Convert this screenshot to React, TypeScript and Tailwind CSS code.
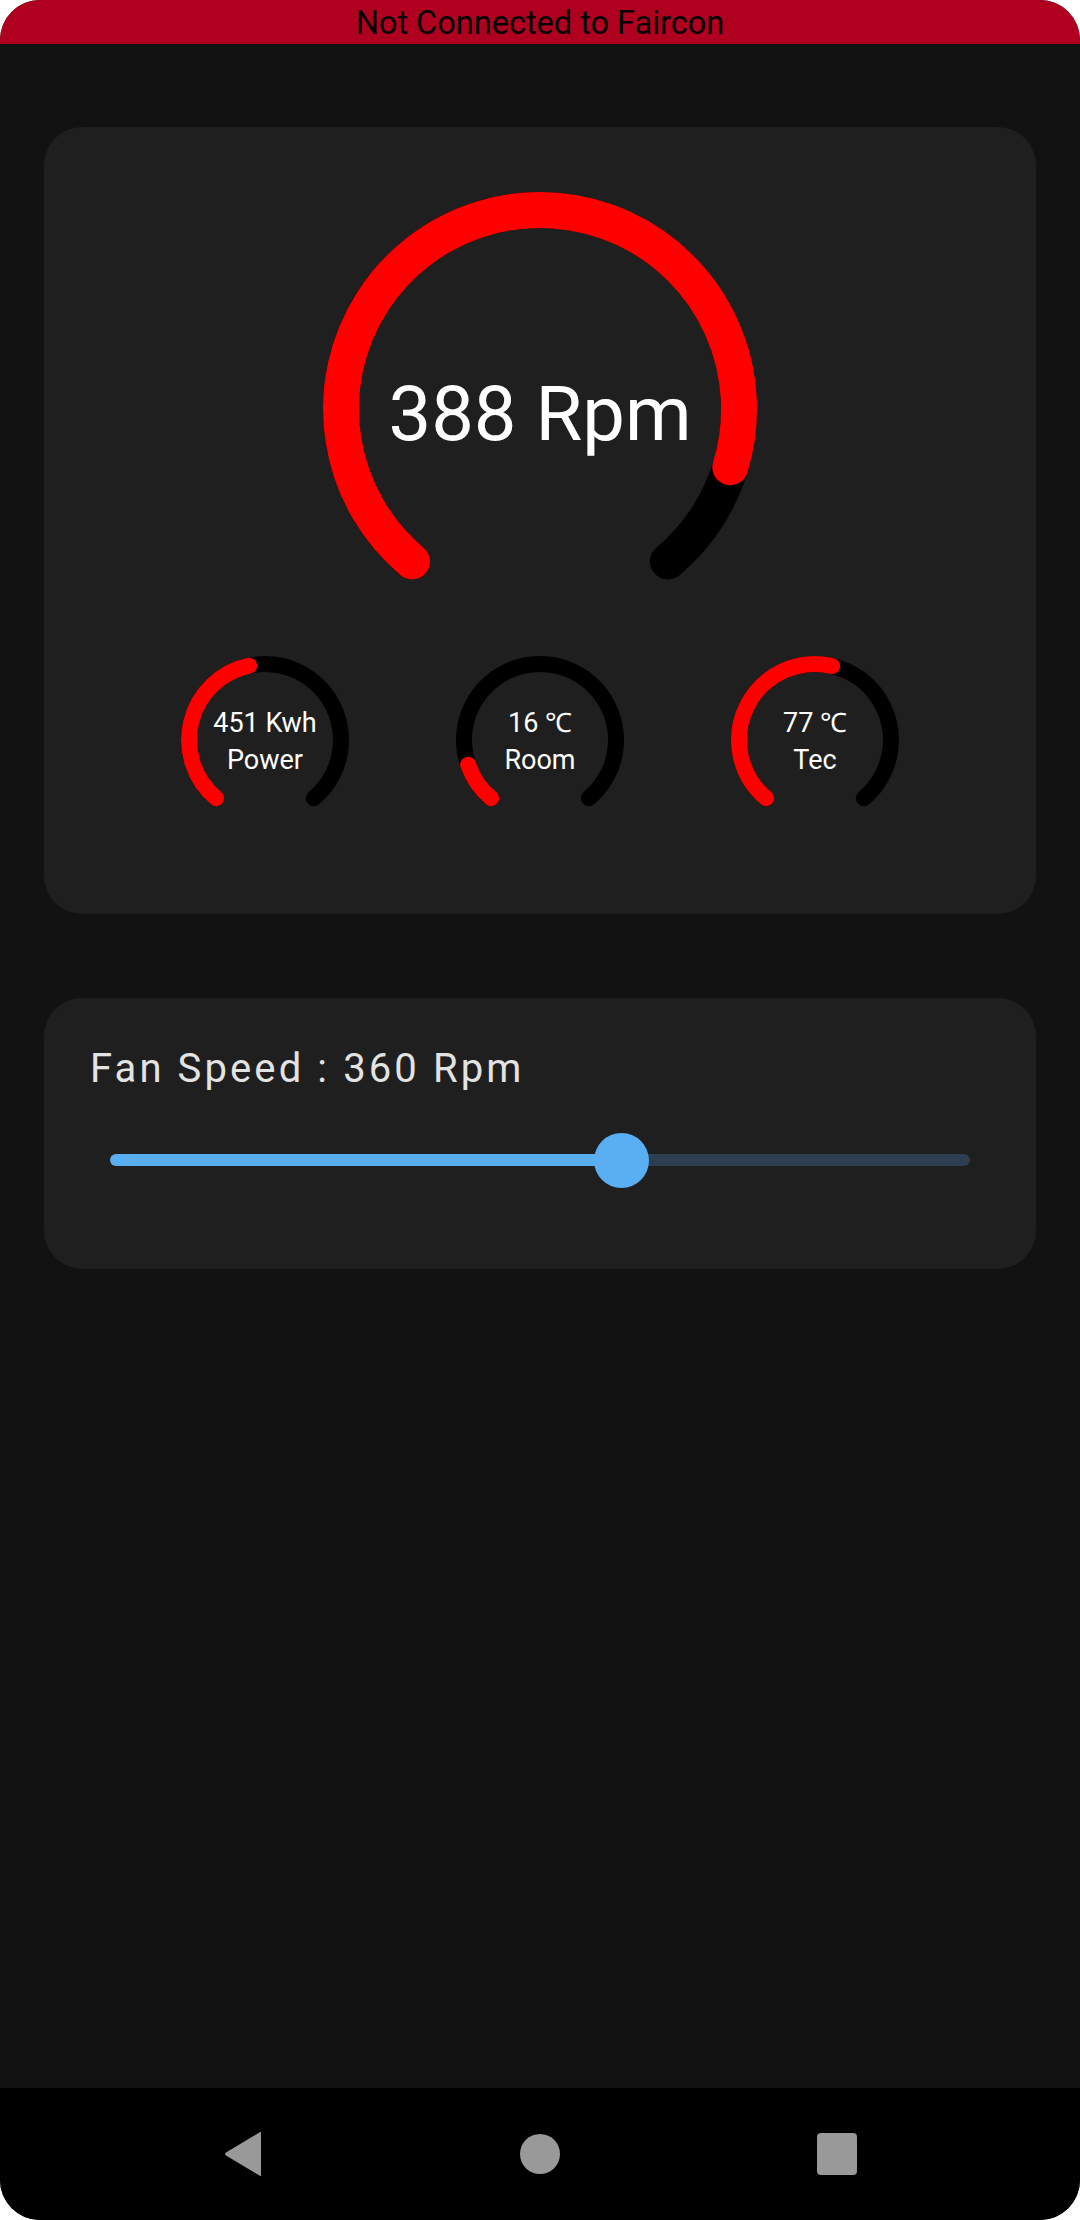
import React from "react";

// Dashboard for the Faircon controller: a big RPM gauge, three small sensor
// gauges and a fan speed slider. Everything is static, values are hard-wired.

const font = { fontFamily: "Roboto, 'Noto Sans', sans-serif" };

const START = 130; // degrees, clockwise from +x (screen coords)
const SWEEP = 280;

function point(cx: number, cy: number, r: number, deg: number) {
  const a = (deg * Math.PI) / 180;
  return [cx + r * Math.cos(a), cy + r * Math.sin(a)];
}

function arc(cx: number, cy: number, r: number, sweep: number) {
  const [x1, y1] = point(cx, cy, r, START);
  const [x2, y2] = point(cx, cy, r, START + sweep);
  const large = sweep > 180 ? 1 : 0;
  return `M ${x1} ${y1} A ${r} ${r} 0 ${large} 1 ${x2} ${y2}`;
}

function Gauge({
  size,
  r,
  stroke,
  sweep,
  children,
}: {
  size: number;
  r: number;
  stroke: number;
  sweep: number;
  children: React.ReactNode;
}) {
  const c = size / 2;
  return (
    <div className="relative shrink-0" style={{ width: size, height: size }}>
      <svg width={size} height={size} viewBox={`0 0 ${size} ${size}`}>
        <path d={arc(c, c, r, SWEEP)} fill="none" stroke="#000000" strokeWidth={stroke} strokeLinecap="round" />
        <path d={arc(c, c, r, sweep)} fill="none" stroke="#ff0000" strokeWidth={stroke} strokeLinecap="round" />
      </svg>
      <div className="absolute inset-0 flex flex-col items-center justify-center text-white">{children}</div>
    </div>
  );
}

function SmallGauge({ value, label, sweep }: { value: string; label: string; sweep: number }) {
  return (
    <Gauge size={180} r={76} stroke={16} sweep={sweep}>
      <div className="pt-[4px] text-center text-[27px] leading-[37px]">
        <div>{value}</div>
        <div>{label}</div>
      </div>
    </Gauge>
  );
}

export default function App() {
  return (
    <div className="h-[2220px] w-[1080px] bg-white" style={font}>
      <div className="flex h-full flex-col overflow-hidden rounded-[40px] bg-[#121212]">
        <div className="flex h-[44px] shrink-0 items-center justify-center bg-[#b00020] pt-[3px] text-[32.5px] leading-none text-black">
          Not Connected to Faircon
        </div>

        <div className="flex flex-1 flex-col px-[44px] pt-[83px]">
          <div className="flex h-[787px] flex-col items-center rounded-[38px] bg-[#1f1f1f] pt-[62px]">
            <Gauge size={440} r={199} stroke={36} sweep={247}>
              <div className="mt-[9px] text-[76px] leading-none">388 Rpm</div>
            </Gauge>
            <div className="mt-[21px] flex gap-[95px]">
              <SmallGauge value="451 Kwh" label="Power" sweep={128} />
              <SmallGauge value="16 ℃" label="Room" sweep={31} />
              <SmallGauge value="77 ℃" label="Tec" sweep={153} />
            </div>
          </div>

          <div className="mt-[84px] h-[271px] rounded-[38px] bg-[#1f1f1f] pt-[47px]">
            <div className="pl-[46px] text-[40px] leading-[48px] tracking-[3.1px] text-[#e3e3e3]">
              Fan Speed : 360 Rpm
            </div>
            <div className="mt-[39px] px-[66px]">
              <div className="relative flex h-[56px] items-center">
                <div className="h-[12px] w-[512px] rounded-l-full bg-[#5aaef2]" />
                <div className="h-[12px] flex-1 rounded-r-full bg-[#2c3e4f]" />
                <div className="absolute left-[484px] top-[1px] h-[55px] w-[55px] rounded-full bg-[#5aaef2]" />
              </div>
            </div>
          </div>
        </div>

        <div className="flex h-[132px] shrink-0 items-center justify-center gap-[257px] bg-black">
          <div className="flex h-[45px] w-[40px] items-center justify-center">
            <svg width="40" height="46" viewBox="0 0 40 46">
              <path d="M38 2 L38 44 Q38 46 36.5 44.5 L3 24.5 Q1 23 3 21.5 L36.5 1.5 Q38 0 38 2 Z" fill="#999999" />
            </svg>
          </div>
          <div className="h-[40px] w-[40px] rounded-full bg-[#999999]" />
          <div className="h-[42px] w-[40px] rounded-[4px] bg-[#999999]" />
        </div>
      </div>
    </div>
  );
}
